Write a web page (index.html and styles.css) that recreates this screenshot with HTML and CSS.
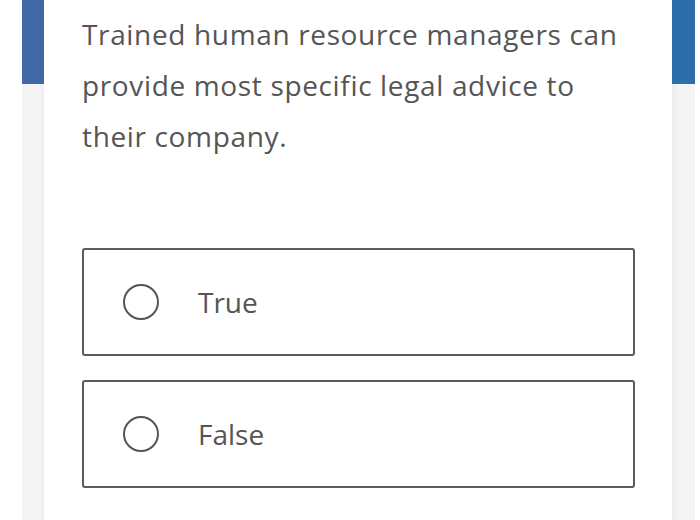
FILE: index.html
```html
<!DOCTYPE html>
<html lang="en">
<head>
  <meta charset="UTF-8">
  <title>Question</title>
  <link rel="stylesheet" href="styles.css">
</head>
<body>
  <div class="page">
    <div class="gutter"></div>
    <div class="side side-left"><div class="side-top"></div></div>

    <!-- Cartão da pergunta -->
    <div class="card">
      <p class="question">Trained human resource managers can provide most specific legal advice to their company.</p>

      <div class="options">
        <label class="option">
          <span class="radio"></span>
          <span class="option-text">True</span>
        </label>
        <label class="option">
          <span class="radio"></span>
          <span class="option-text">False</span>
        </label>
      </div>
    </div>

    <div class="side side-right"><div class="side-top"></div></div>
  </div>
</body>
</html>
```

FILE: styles.css
```css
* {
  margin: 0;
  padding: 0;
  box-sizing: border-box;
}

body {
  background: #fff;
  font-family: "Open Sans", "Liberation Sans", sans-serif;
  color: #555;
}

.page {
  display: flex;
  height: 520px;
  overflow: hidden;
}

.gutter {
  width: 22px;
  flex-shrink: 0;
}

.side {
  width: 22px;
  flex-shrink: 0;
  background: #f4f4f4;
}

.side-left {
  background: linear-gradient(to right, #f4f4f4 80%, #ececec);
}

.side-right {
  width: 23px;
  background: linear-gradient(to right, #ececec, #f4f4f4 30%);
}

.side-top {
  height: 84px;
}

.side-left .side-top {
  background: #4067a6;
}

.side-right .side-top {
  background: #2d6da9;
}

.card {
  width: 628px;
  flex-shrink: 0;
  background: #fff;
  padding: 9px 37px 0 38px;
}

.question {
  font-size: 28px;
  line-height: 51px;
  letter-spacing: 0.65px;
  color: #555;
}

.options {
  margin-top: 86px;
  display: flex;
  flex-direction: column;
  gap: 24px;
}

.option {
  display: flex;
  align-items: center;
  height: 108px;
  border: 2px solid #5a5a5a;
  border-radius: 3px;
  padding-left: 39px;
  gap: 39px;
  cursor: pointer;
}

.radio {
  width: 36px;
  height: 36px;
  border: 2px solid #555;
  border-radius: 50%;
  flex-shrink: 0;
}

.option-text {
  font-size: 28px;
  color: #555;
}
```
